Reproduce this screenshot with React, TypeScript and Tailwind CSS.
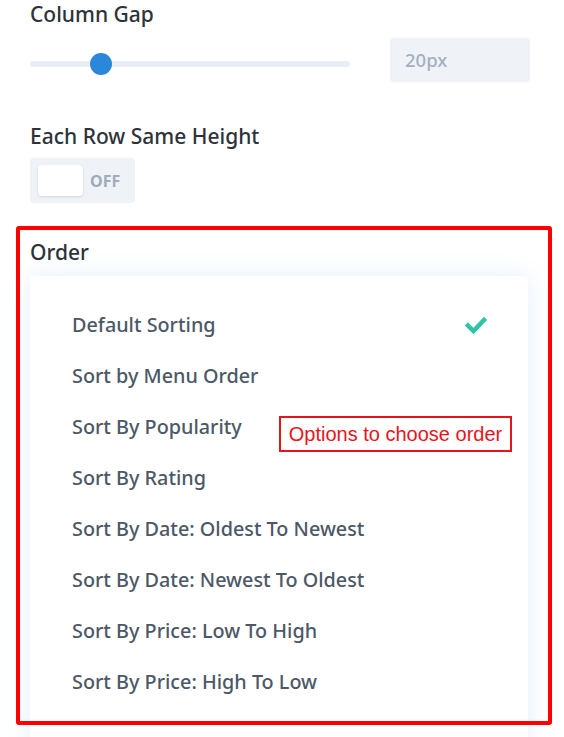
import React from 'react';

const options = [
  'Default Sorting',
  'Sort by Menu Order',
  'Sort By Popularity',
  'Sort By Rating',
  'Sort By Date: Oldest To Newest',
  'Sort By Date: Newest To Oldest',
  'Sort By Price: Low To High',
  'Sort By Price: High To Low',
];

const App: React.FC = () => {
  return (
    <div className="relative w-[564px] h-[737px] bg-white overflow-hidden font-['Noto_Sans',sans-serif]">
      <div className="pl-[30px] pr-[34px]">
        {/* Column Gap */}
        <div className="text-[21px] leading-[28px] font-medium text-[#2d3339]">Column Gap</div>
        <div className="flex items-center mt-[10px] h-[44px]">
          <div className="relative w-[320px] h-[6px] rounded-full bg-[#e9eef5] mt-[7px]">
            <div className="absolute left-[60px] top-1/2 -translate-y-1/2 w-[22px] h-[22px] rounded-full bg-[#2b87da]" />
          </div>
          <div className="ml-[40px] w-[140px] h-[44px] rounded-[4px] bg-[#eff3f8] flex items-center pl-[15px] text-[18.5px] text-[#a3b0c2] font-medium">
            20px
          </div>
        </div>

        {/* Each Row Same Height */}
        <div className="mt-[40px] text-[21px] leading-[28px] font-medium text-[#2d3339]">Each Row Same Height</div>
        <div className="mt-[8px] w-[105px] h-[45px] rounded-[4px] bg-[#eff3f8] flex items-center pl-[8px]">
          <div className="w-[45px] h-[31px] rounded-[4px] bg-white shadow-[0_1px_3px_rgba(0,0,0,0.12)]" />
          <span className="ml-[7px] text-[16px] font-bold text-[#a0abb9]">OFF</span>
        </div>

        {/* Order */}
        <div className="mt-[35px] text-[21px] leading-[28px] font-medium text-[#2d3339]">Order</div>
        <div className="mt-[10px] w-[498px] rounded-[3px] bg-white shadow-[0_0_24px_rgba(43,135,218,0.12)] pt-[23px] pb-[40px] pl-[42px] pr-[42px]">
          {options.map((o, i) => (
            <div key={o} className="h-[51px] flex items-center justify-between text-[19.8px] font-medium text-[#4c5866]">
              <span>{o}</span>
              {i === 0 && (
                <svg width="22" height="18" viewBox="0 0 22 18" className="mr-[-1px]">
                  <path d="M3 9.5 L8.5 15 L19 4" fill="none" stroke="#2ec4a5" strokeWidth="4.5" strokeLinecap="square" />
                </svg>
              )}
            </div>
          ))}
        </div>
      </div>

      {/* annotation overlays */}
      <div className="absolute left-[16px] top-[226px] w-[536px] h-[499px] border-[4px] border-[#ff0000] rounded-[3px] pointer-events-none" />
      <div className="absolute left-[279px] top-[416px] w-[233px] h-[36px] border-[2px] border-[#e8141b] flex items-center justify-center text-[20px] text-[#e8141b] font-['Liberation_Sans',Arial,sans-serif]">
        Options to choose order
      </div>
    </div>
  );
};

export default App;
